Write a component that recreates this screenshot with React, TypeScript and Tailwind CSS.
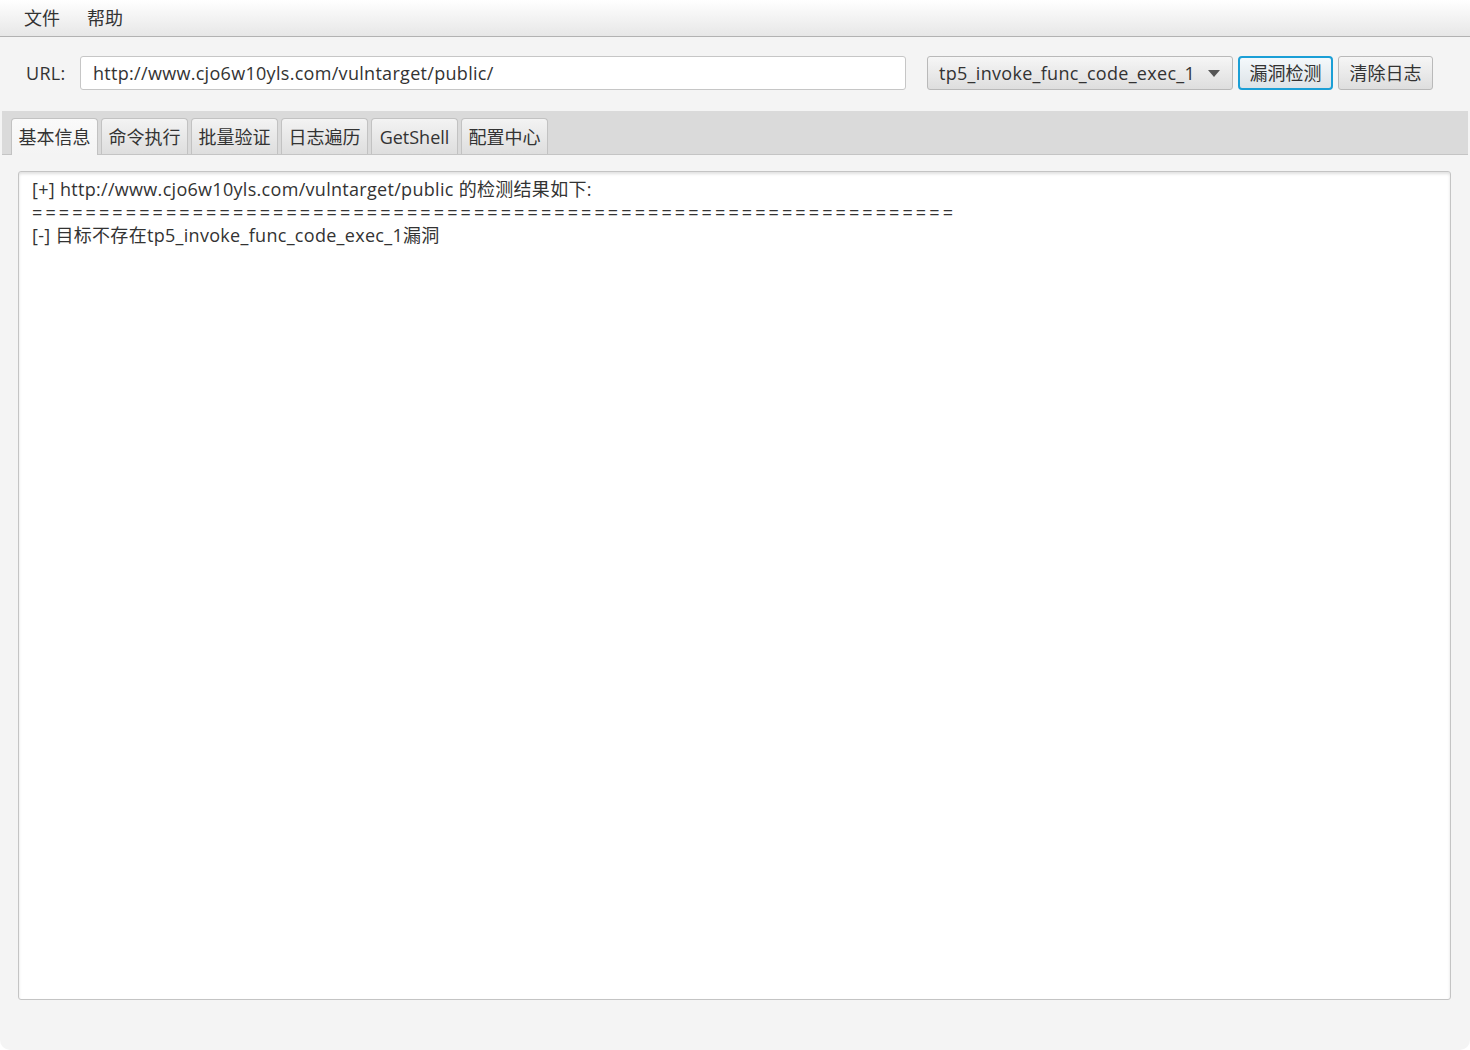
import React from "react";

const tabs = ["基本信息", "命令执行", "批量验证", "日志遍历", "GetShell", "配置中心"];

export default function App() {
  const eq = "=".repeat(69);
  return (
    <div
      className="w-[1470px] h-[1050px] bg-[#f4f4f4] flex flex-col overflow-hidden rounded-b-[10px] text-[#333333] text-[18px] tracking-[0.3px]"
      style={{ fontFamily: '"Open Sans", "Noto Sans CJK SC", sans-serif' }}
    >
      {/* Menu bar */}
      <div className="h-[37px] shrink-0 flex items-center pl-[10px] bg-gradient-to-b from-white to-[#e7e7e7] border-b border-[#b2b2b2] tracking-normal">
        <span className="px-[14px] leading-none">文件</span>
        <span className="px-[13px] leading-none">帮助</span>
      </div>

      {/* URL row */}
      <div className="h-[74px] shrink-0 flex items-center pl-[26px] pr-[37px] pb-[2px]">
        <span className="w-[54px] leading-none">URL:</span>
        <div className="w-[826px] h-[34px] bg-white border border-[#c6c6c6] rounded-[3px] flex items-center px-[12px] leading-none">
          http://www.cjo6w10yls.com/vulntarget/public/
        </div>
        <div className="ml-[21px] w-[306px] h-[34px] rounded-[3px] border border-[#b9b9b9] bg-gradient-to-b from-[#f6f6f6] to-[#dedede] flex items-center justify-between pl-[11px] pr-[12px] leading-none">
          <span>tp5_invoke_func_code_exec_1</span>
          <svg width="12" height="7" viewBox="0 0 12 7">
            <path d="M0 0 L12 0 L6 7 Z" fill="#555555" />
          </svg>
        </div>
        <div className="ml-[5px] w-[95px] h-[34px] rounded-[4px] border-2 border-[#1b9fd6] bg-gradient-to-b from-[#f4f9fc] to-[#dde3e7] flex items-center justify-center leading-none tracking-normal">
          漏洞检测
        </div>
        <div className="ml-[5px] w-[95px] h-[34px] rounded-[3px] border border-[#b9b9b9] bg-gradient-to-b from-[#f6f6f6] to-[#dedede] flex items-center justify-center leading-none tracking-normal">
          清除日志
        </div>
      </div>

      {/* Tab pane */}
      <div className="flex-1 flex flex-col mx-[2px]">
        <div className="h-[44px] shrink-0 bg-[#dadada] border-b border-[#c4c4c4] flex items-end pl-[9px] gap-[3px] tracking-normal">
          {tabs.map((t, i) => (
            <div
              key={t}
              className={
                i === 0
                  ? "w-[87px] h-[37px] -mb-px rounded-t-[4px] border border-b-0 border-[#c2c2c2] bg-gradient-to-b from-[#fafafa] to-[#f4f4f4] flex items-center justify-center leading-none"
                  : "w-[87px] h-[36px] rounded-t-[4px] border border-b-0 border-[#c2c2c2] bg-gradient-to-b from-[#f3f3f3] to-[#dedede] flex items-center justify-center leading-none"
              }
            >
              {t}
            </div>
          ))}
        </div>
        <div className="pl-[16px] pr-[17px] pt-[16px]">
          <div className="h-[829px] bg-white border border-[#c4c4c4] rounded-[3px] shadow-[inset_0_2px_3px_rgba(0,0,0,0.12)] pl-[13px] pt-[6px] leading-[23px]">
            <div>[+] http://www.cjo6w10yls.com/vulntarget/public 的检测结果如下:</div>
            <div className="tracking-[3.1px] whitespace-nowrap">{eq}</div>
            <div>[-] 目标不存在tp5_invoke_func_code_exec_1漏洞</div>
          </div>
        </div>
      </div>
    </div>
  );
}
